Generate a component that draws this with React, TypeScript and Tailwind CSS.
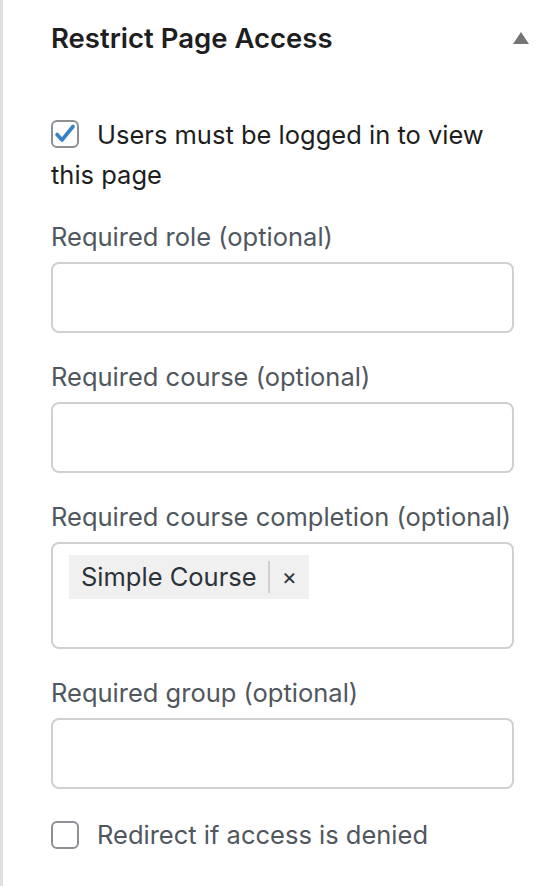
import type { ReactNode } from "react";

function Checkbox({ checked }: { checked?: boolean }) {
	return (
		<span className="relative flex size-[28px] shrink-0 items-center justify-center rounded-[6px] border-2 border-[#8c8f94] bg-white">
			{checked && (
				<svg className="size-[24px]" fill="none" viewBox="0 0 24 24">
					<path
						d="M4 12.5l5 5.5L20 4.5"
						stroke="#3582c4"
						strokeLinecap="round"
						strokeLinejoin="round"
						strokeWidth="3.6"
					/>
				</svg>
			)}
		</span>
	);
}

function Field({ label, children }: { label: string; children?: ReactNode }) {
	return (
		<div>
			<div className="mb-[9px] text-[25.5px] leading-[32px] text-[#50575e]">
				{label}
			</div>
			{children ?? (
				<div className="h-[71px] rounded-[8px] border-2 border-[#d0d0d0] bg-white" />
			)}
		</div>
	);
}

export default function App() {
	return (
		<div
			className="min-h-[886px] border-l-[3px] border-[#e0e0e0] bg-white"
			style={{ fontFamily: "Inter, 'Noto Sans', sans-serif" }}
		>
			<div className="flex items-center justify-between pl-[48px] pr-[31px] pt-[21px]">
				<h2 className="text-[27.5px] font-semibold leading-[34px] text-[#1e1e1e]">
					Restrict Page Access
				</h2>
				<svg className="h-[12px] w-[16px]" viewBox="0 0 16 12">
					<path d="M8 0L16 12H0z" fill="#757575" />
				</svg>
			</div>

			<div className="pl-[48px] pr-[46px] pt-[60px]">
				<div className="text-[25.5px] leading-[40px] text-[#1e1e1e]">
					<span className="mr-[18px] inline-flex align-[-2px]">
						<Checkbox checked />
					</span>
					Users must be logged in to view this page
				</div>

				<div className="mt-[26px] flex flex-col gap-[28px]">
					<Field label="Required role (optional)" />
					<Field label="Required course (optional)" />
					<Field label="Required course completion (optional)">
						<div className="h-[107px] rounded-[8px] border-2 border-[#d0d0d0] bg-white px-[16px] pt-[11px]">
							<span className="inline-flex h-[44px] items-center bg-[#f0f0f0] pl-[12px] text-[25.5px] text-[#2c3338]">
								Simple Course
								<span className="ml-[11px] h-[32px] w-[2px] bg-[#d0d0d0]" />
								<span className="pl-[12px] pr-[12px] text-[23px]">×</span>
							</span>
						</div>
					</Field>
					<Field label="Required group (optional)" />
				</div>

				<div className="mt-[27px] flex items-center gap-[18px] text-[25.5px] text-[#50575e]">
					<Checkbox />
					Redirect if access is denied
				</div>
			</div>
		</div>
	);
}
